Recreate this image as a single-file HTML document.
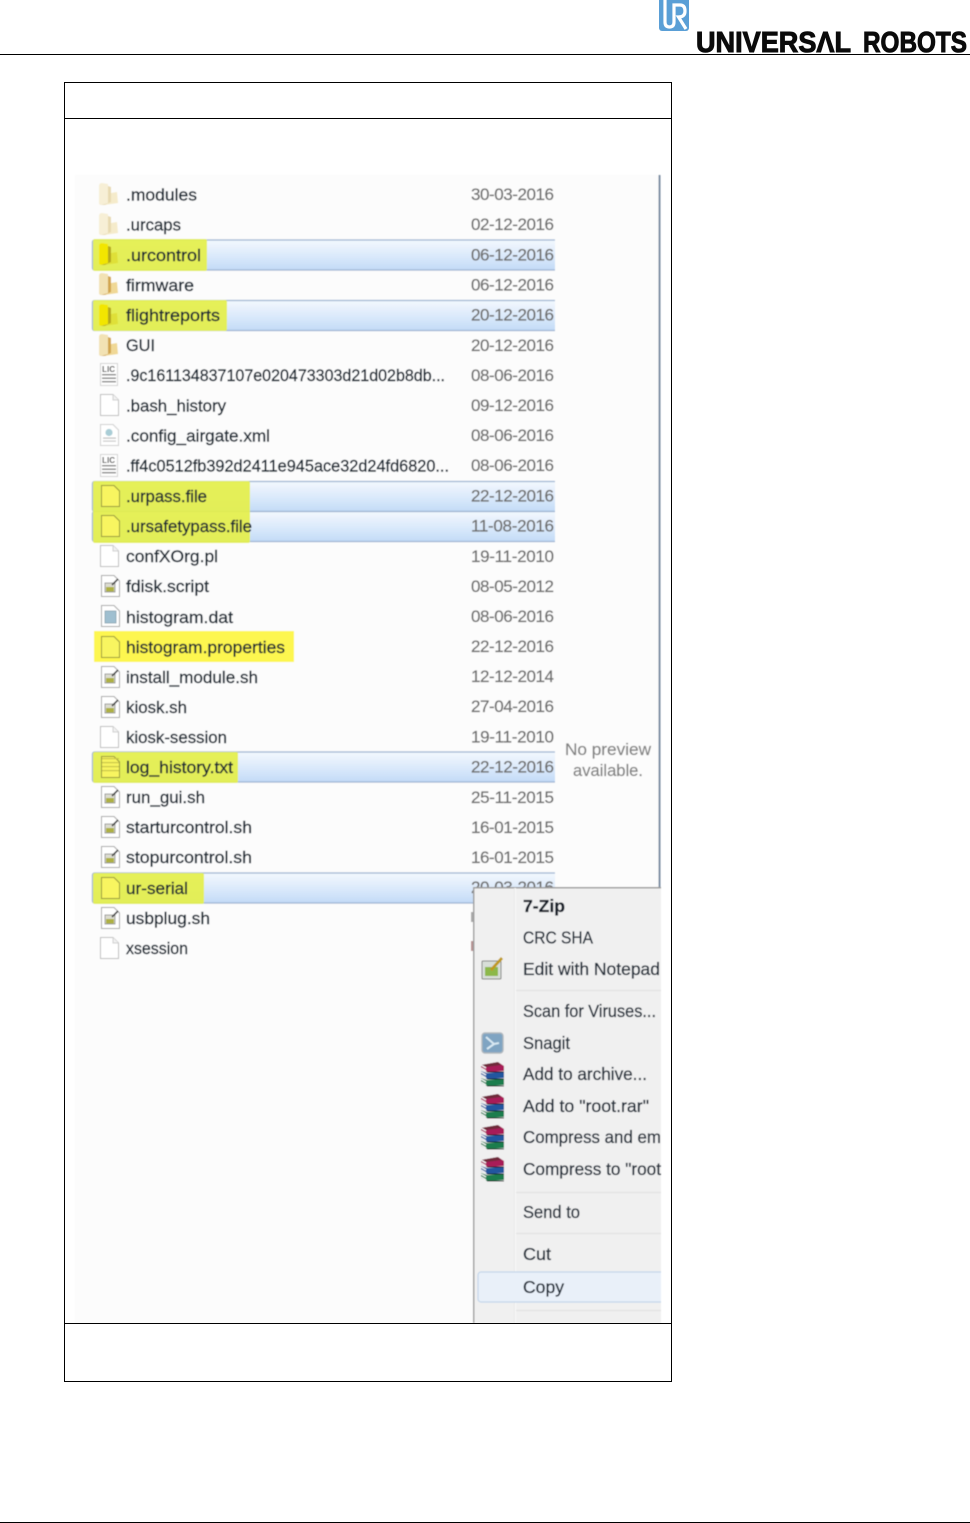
<!DOCTYPE html>
<html lang="en">
<head>
<meta charset="utf-8">
<title>Universal Robots</title>
<style>
html,body{margin:0;padding:0;background:#fff;}
svg{display:block;}
text{font-family:"Liberation Sans",sans-serif;}
.n text{font-size:17px;fill:#1f2a36;stroke:#1f2a36;stroke-width:.4px;}
.d text{font-size:17px;fill:#6e6e6e;stroke:#6e6e6e;stroke-width:.25px;}
.m text{font-size:17.5px;fill:#28323e;stroke:#28323e;stroke-width:.35px;}
</style>
</head>
<body>
<svg width="970" height="1523" viewBox="0 0 970 1523" xmlns="http://www.w3.org/2000/svg">
<defs>
<filter id="b" x="-5%" y="-5%" width="110%" height="110%"><feGaussianBlur stdDeviation="0.5"/></filter>
<linearGradient id="sel" x1="0" x2="0" y1="0" y2="1"><stop offset="0" stop-color="#f3f8fe"/><stop offset=".5" stop-color="#dceafb"/><stop offset="1" stop-color="#c3dbf7"/></linearGradient>
<clipPath id="menuclip"><rect x="473" y="887" width="188" height="436"/></clipPath>
<clipPath id="rowclip"><rect x="85" y="230" width="470" height="680"/></clipPath>

<g id="folder"><path d="M0 3 Q0 0 3 0 L9 1 L9 20 L2 22 Q0 22 0 20Z" fill="#f2e2b4"/><path d="M9 3 L12 4 L12 20 L6 22 L2 22 L9 20Z" fill="#d2a650"/><path d="M12 10 L18 9 L19 20 L5 22 L12 19Z" fill="#f0d896"/></g>
<g id="folderL"><path d="M0 3 Q0 0 3 0 L9 1 L9 20 L2 22 Q0 22 0 20Z" fill="#f7efd6"/><path d="M9 3 L12 4 L12 20 L6 22 L2 22 L9 20Z" fill="#e8dab2"/><path d="M12 10 L18 9 L19 20 L5 22 L12 19Z" fill="#f5ebcb"/></g>
<g id="folderY"><path d="M0 3 Q0 0 3 0 L9 1 L9 20 L2 22 Q0 22 0 20Z" fill="#f2e600"/><path d="M9 3 L12 4 L12 20 L6 22 L2 22 L9 20Z" fill="#b4a81c"/><path d="M12 10 L18 9 L19 20 L5 22 L12 19Z" fill="#dfe038"/></g>
<g id="file"><path d="M.5 .5H13L18.5 6V21.5H.5Z" fill="#fff" stroke="#bdbdbd"/><path d="M13 .5V6H18.5" fill="#f2f2f2" stroke="#cfcfcf"/></g>
<g id="fileY"><path d="M.5 .5H13L18.5 6V21.5H.5Z" fill="#f8f560" stroke="#94943e"/></g>
<g id="script"><path d="M.5 .5H13L18.5 6V21.5H.5Z" fill="#fff" stroke="#a5a5a5"/><rect x="4" y="8" width="10" height="9" fill="#dcdcd0" stroke="#8a8a8a" stroke-width=".8"/><rect x="5" y="12" width="8" height="4.5" fill="#aeb042"/><path d="M11 10 L17 4" stroke="#444" stroke-width="1.6"/></g>
<g id="dat"><path d="M.5 .5H13L18.5 6V21.5H.5Z" fill="#fff" stroke="#a5a5a5"/><rect x="4" y="6" width="11" height="12" fill="#9fbfd0" stroke="#86a0ae" stroke-width=".8"/></g>
<g id="lic"><rect x=".5" y=".5" width="17" height="22" fill="#fff" stroke="#d2d2d2"/><rect x="2" y="11" width="14" height="1.4" fill="#828282"/><rect x="2" y="14.5" width="14" height="1.4" fill="#828282"/><rect x="2" y="18" width="14" height="1.4" fill="#828282"/></g>
<g id="xml"><path d="M.5 .5H13L18.5 6V21.5H.5Z" fill="#fff" stroke="#cfcfcf"/><circle cx="9" cy="8.500" r="3.6" fill="#a9cdd6"/><rect x="3" y="13.500" width="13" height="1.2" fill="#bdbdbd"/><rect x="3" y="16.500" width="13" height="1.2" fill="#c9c9c9"/></g>
<g id="rar"><path d="M1 3 L18 0 L24 4 L24 9 L7 10 L1 7Z" fill="#a81e58"/><path d="M1 3 L18 0 L21 3 L6 5Z" fill="#6f2a3a"/><path d="M1 9 L7 11 L24 10 L24 16 L7 17 L1 14Z" fill="#21569f"/><path d="M1 16 L7 18 L24 17 L24 23 L7 24 L1 21Z" fill="#1c7d4e"/><path d="M1 3 L6 6 M1 6 L6 9 M1 10 L6 13 M1 13 L6 16 M1 17 L6 20 M1 20 L6 23" stroke="#f4f4f4" stroke-width="1.4"/><path d="M7 10 H24 M7 17 H24 M7 24 H24" stroke="#111" stroke-width="1.1"/></g>
</defs>

<!-- page header -->
<rect x="0" y="54" width="970" height="1" fill="#000"/>
<rect x="0" y="1522" width="970" height="1" fill="#000"/>
<rect x="659" y="-3" width="30" height="34" rx="3" fill="#5a9fd6"/>
<path d="M665 0 V22 Q665 27 669.500 27 Q674 27 674 22 V5 H680 Q685 5 685 11 Q685 17 678.500 17 L686 29" fill="none" stroke="#fff" stroke-width="3.2"/>
<text x="696" y="52" font-size="29" font-weight="700" textLength="155" lengthAdjust="spacingAndGlyphs" fill="#0b0b0b" stroke="#0b0b0b" stroke-width="1">UNIVERSΛL</text>
<text x="863" y="52" font-size="29" font-weight="700" textLength="104" lengthAdjust="spacingAndGlyphs" fill="#0b0b0b" stroke="#0b0b0b" stroke-width="1">ROBOTS</text>

<!-- table -->
<rect x="64.5" y="82.5" width="607" height="1299" fill="#fff" stroke="#000"/>
<rect x="64" y="118" width="607" height="1" fill="#000"/>

<!-- screenshot contents -->
<g filter="url(#b)">
<rect x="75" y="175" width="585" height="1148" fill="#fcfcfc"/>
<rect x="658.5" y="175" width="2" height="712" fill="#7b8ea3"/>

<!-- selection rows -->
<g clip-path="url(#rowclip)">
<g fill="url(#sel)" stroke="#9db4d2" stroke-width="1.3">
<rect x="92.5" y="240" width="480" height="30" rx="2"/>
<rect x="92.5" y="300.500" width="480" height="30" rx="2"/>
<rect x="92.5" y="481.500" width="480" height="30" rx="2"/>
<rect x="92.5" y="511.500" width="480" height="30" rx="2"/>
<rect x="92.5" y="752" width="480" height="30" rx="2"/>
<rect x="92.5" y="873" width="480" height="30" rx="2"/>
</g>
</g>

<!-- yellow highlights -->
<g fill="#e4ef4c" fill-opacity=".93">
<rect x="93" y="239" width="114" height="32" rx="2"/>
<rect x="93" y="300" width="134" height="31" rx="2"/>
<rect x="93" y="481" width="157" height="62" rx="2"/>
<rect x="94" y="631" width="200" height="31" fill="#fdf650" fill-opacity="1"/>
<rect x="93" y="752" width="145" height="31" rx="2"/>
<rect x="93" y="873" width="111" height="31" rx="2"/>
</g>

<!-- icons -->
<use href="#folderL" x="99" y="183"/>
<use href="#folderL" x="99" y="213"/>
<use href="#folderY" x="99" y="243"/>
<use href="#folder" x="99" y="273"/>
<use href="#folderY" x="99" y="304"/>
<use href="#folder" x="99" y="334"/>
<use href="#lic" x="100" y="363"/>
<use href="#file" x="100" y="394"/>
<use href="#xml" x="100" y="424"/>
<use href="#lic" x="100" y="454"/>
<use href="#fileY" x="101" y="485"/>
<use href="#fileY" x="101" y="515"/>
<use href="#file" x="100" y="545"/>
<use href="#script" x="101" y="575"/>
<use href="#dat" x="101" y="605"/>
<use href="#fileY" x="101" y="636"/>
<use href="#script" x="101" y="666"/>
<use href="#script" x="101" y="696"/>
<use href="#file" x="100" y="726"/>
<use href="#fileY" x="101" y="756"/>
<use href="#script" x="101" y="786"/>
<use href="#script" x="101" y="816"/>
<use href="#script" x="101" y="846"/>
<use href="#fileY" x="101" y="877"/>
<use href="#script" x="101" y="907"/>
<use href="#file" x="100" y="937"/>
<text x="102" y="372" font-size="8" font-weight="700" fill="#555" textLength="13">LIC</text>
<text x="102" y="463" font-size="8" font-weight="700" fill="#555" textLength="13">LIC</text>
<rect x="102" y="758" width="17" height="1.2" fill="#c9c54a"/>
<rect x="102" y="762" width="17" height="1.2" fill="#c9c54a"/>
<rect x="102" y="766" width="17" height="1.2" fill="#c9c54a"/>
<rect x="102" y="770" width="17" height="1.2" fill="#c9c54a"/>

<!-- names -->
<g class="n">
<text x="126" y="200.400" textLength="71" lengthAdjust="spacingAndGlyphs">.modules</text>
<text x="126" y="230.600" textLength="55" lengthAdjust="spacingAndGlyphs">.urcaps</text>
<text x="126" y="260.800" textLength="75" lengthAdjust="spacingAndGlyphs">.urcontrol</text>
<text x="126" y="290.800" textLength="68" lengthAdjust="spacingAndGlyphs">firmware</text>
<text x="126" y="321" textLength="94" lengthAdjust="spacingAndGlyphs">flightreports</text>
<text x="126" y="351" textLength="29" lengthAdjust="spacingAndGlyphs">GUI</text>
<text x="126" y="381" textLength="319" lengthAdjust="spacingAndGlyphs">.9c161134837107e020473303d21d02b8db...</text>
<text x="126" y="411.400" textLength="100" lengthAdjust="spacingAndGlyphs">.bash_history</text>
<text x="126" y="441.400" textLength="144" lengthAdjust="spacingAndGlyphs">.config_airgate.xml</text>
<text x="126" y="471.400" textLength="323" lengthAdjust="spacingAndGlyphs">.ff4c0512fb392d2411e945ace32d24fd6820...</text>
<text x="126" y="501.800" textLength="81" lengthAdjust="spacingAndGlyphs">.urpass.file</text>
<text x="126" y="532" textLength="126" lengthAdjust="spacingAndGlyphs">.ursafetypass.file</text>
<text x="126" y="562" textLength="92" lengthAdjust="spacingAndGlyphs">confXOrg.pl</text>
<text x="126" y="592" textLength="83" lengthAdjust="spacingAndGlyphs">fdisk.script</text>
<text x="126" y="622.800" textLength="107" lengthAdjust="spacingAndGlyphs">histogram.dat</text>
<text x="126" y="652.800" textLength="159" lengthAdjust="spacingAndGlyphs">histogram.properties</text>
<text x="126" y="682.800" textLength="132" lengthAdjust="spacingAndGlyphs">install_module.sh</text>
<text x="126" y="712.800" textLength="61" lengthAdjust="spacingAndGlyphs">kiosk.sh</text>
<text x="126" y="743" textLength="101" lengthAdjust="spacingAndGlyphs">kiosk-session</text>
<text x="126" y="773" textLength="107" lengthAdjust="spacingAndGlyphs">log_history.txt</text>
<text x="126" y="803" textLength="79" lengthAdjust="spacingAndGlyphs">run_gui.sh</text>
<text x="126" y="833" textLength="126" lengthAdjust="spacingAndGlyphs">starturcontrol.sh</text>
<text x="126" y="863" textLength="126" lengthAdjust="spacingAndGlyphs">stopurcontrol.sh</text>
<text x="126" y="893.800" textLength="62" lengthAdjust="spacingAndGlyphs">ur-serial</text>
<text x="126" y="923.800" textLength="84" lengthAdjust="spacingAndGlyphs">usbplug.sh</text>
<text x="126" y="954" textLength="62" lengthAdjust="spacingAndGlyphs">xsession</text>
</g>

<!-- dates -->
<g class="d">
<text x="471" y="200" textLength="83">30-03-2016</text>
<text x="471" y="230" textLength="83">02-12-2016</text>
<text x="471" y="260.500" textLength="83">06-12-2016</text>
<text x="471" y="290.500" textLength="83">06-12-2016</text>
<text x="471" y="320.500" textLength="83">20-12-2016</text>
<text x="471" y="351" textLength="83">20-12-2016</text>
<text x="471" y="381" textLength="83">08-06-2016</text>
<text x="471" y="411" textLength="83">09-12-2016</text>
<text x="471" y="441" textLength="83">08-06-2016</text>
<text x="471" y="471" textLength="83">08-06-2016</text>
<text x="471" y="501.500" textLength="83">22-12-2016</text>
<text x="471" y="531.500" textLength="83">11-08-2016</text>
<text x="471" y="562" textLength="83">19-11-2010</text>
<text x="471" y="592" textLength="83">08-05-2012</text>
<text x="471" y="622" textLength="83">08-06-2016</text>
<text x="471" y="652" textLength="83">22-12-2016</text>
<text x="471" y="682" textLength="83">12-12-2014</text>
<text x="471" y="712" textLength="83">27-04-2016</text>
<text x="471" y="742.500" textLength="83">19-11-2010</text>
<text x="471" y="772.500" textLength="83">22-12-2016</text>
<text x="471" y="803" textLength="83">25-11-2015</text>
<text x="471" y="833" textLength="83">16-01-2015</text>
<text x="471" y="863" textLength="83">16-01-2015</text>
<text x="471" y="893" textLength="83">20-03-2016</text>
</g>

<text x="565" y="755" font-size="17" fill="#828282" stroke="#828282" stroke-width=".2" textLength="86" lengthAdjust="spacingAndGlyphs">No preview</text>
<text x="573" y="776" font-size="17" fill="#828282" stroke="#828282" stroke-width=".2" textLength="70" lengthAdjust="spacingAndGlyphs">available.</text>

<rect x="471" y="912" width="2" height="10" fill="#a8a8a8"/>
<rect x="471" y="941" width="2" height="10" fill="#b58f8f"/>

<!-- context menu -->
<g clip-path="url(#menuclip)">
<rect x="473" y="887" width="188" height="436" fill="#f0f0f0"/>
<rect x="473" y="887" width="188" height="1.5" fill="#9c9c9c"/>
<rect x="473" y="887" width="1.5" height="436" fill="#a0a0a0"/>
<rect x="514" y="888" width="1" height="436" fill="#e8e8e8"/>
<rect x="515" y="888" width="1" height="436" fill="#fafafa"/>
<g fill="#e0e0e0">
<rect x="516" y="990" width="146" height="1"/>
<rect x="516" y="1192" width="146" height="1"/>
<rect x="516" y="1233" width="146" height="1"/>
<rect x="516" y="1310" width="146" height="1"/>
</g>
<rect x="478" y="1272" width="190" height="30" rx="3" fill="#e9f0f9" stroke="#c3d6ea" stroke-width="1.2"/>

<g transform="translate(482 958)"><rect x="0" y="3" width="19" height="18" rx="1" fill="#d8ded8" stroke="#808080"/><rect x="3" y="9" width="13" height="9" fill="#8cb84a"/><path d="M9 12 L20 0" stroke="#bf9a1c" stroke-width="2.8"/></g>
<g transform="translate(482 1033)"><rect x="0" y="0" width="21" height="20" rx="3" fill="#7fa4c2" stroke="#b0b8be" stroke-width="1.4"/><path d="M4 4 L12 11 L17 10 M5 16 L12 11" stroke="#d8e8f2" stroke-width="2" fill="none"/></g>
<use href="#rar" x="480" y="1062"/>
<use href="#rar" x="480" y="1094"/>
<use href="#rar" x="480" y="1125"/>
<use href="#rar" x="480" y="1157"/>

<g class="m">
<text x="523" y="912" font-weight="700" style="fill:#161e28" textLength="42" lengthAdjust="spacingAndGlyphs">7-Zip</text>
<text x="523" y="943.500" textLength="70" lengthAdjust="spacingAndGlyphs">CRC SHA</text>
<text x="523" y="975" textLength="137" lengthAdjust="spacingAndGlyphs">Edit with Notepad</text>
<text x="523" y="1017" textLength="133" lengthAdjust="spacingAndGlyphs">Scan for Viruses...</text>
<text x="523" y="1049" textLength="47" lengthAdjust="spacingAndGlyphs">Snagit</text>
<text x="523" y="1080" textLength="124" lengthAdjust="spacingAndGlyphs">Add to archive...</text>
<text x="523" y="1112" textLength="126" lengthAdjust="spacingAndGlyphs">Add to "root.rar"</text>
<text x="523" y="1143" textLength="138" lengthAdjust="spacingAndGlyphs">Compress and em</text>
<text x="523" y="1175" textLength="138" lengthAdjust="spacingAndGlyphs">Compress to "root</text>
<text x="523" y="1218" textLength="57" lengthAdjust="spacingAndGlyphs">Send to</text>
<text x="523" y="1260" textLength="28" lengthAdjust="spacingAndGlyphs">Cut</text>
<text x="523" y="1293" textLength="41" lengthAdjust="spacingAndGlyphs">Copy</text>
</g>
</g>
</g>

<!-- table lines above screenshot -->
<rect x="64" y="1323" width="607" height="1" fill="#000"/>
<rect x="64" y="82" width="1" height="1300" fill="#000"/>
<rect x="671" y="82" width="1" height="1300" fill="#000"/>
</svg>
</body>
</html>
